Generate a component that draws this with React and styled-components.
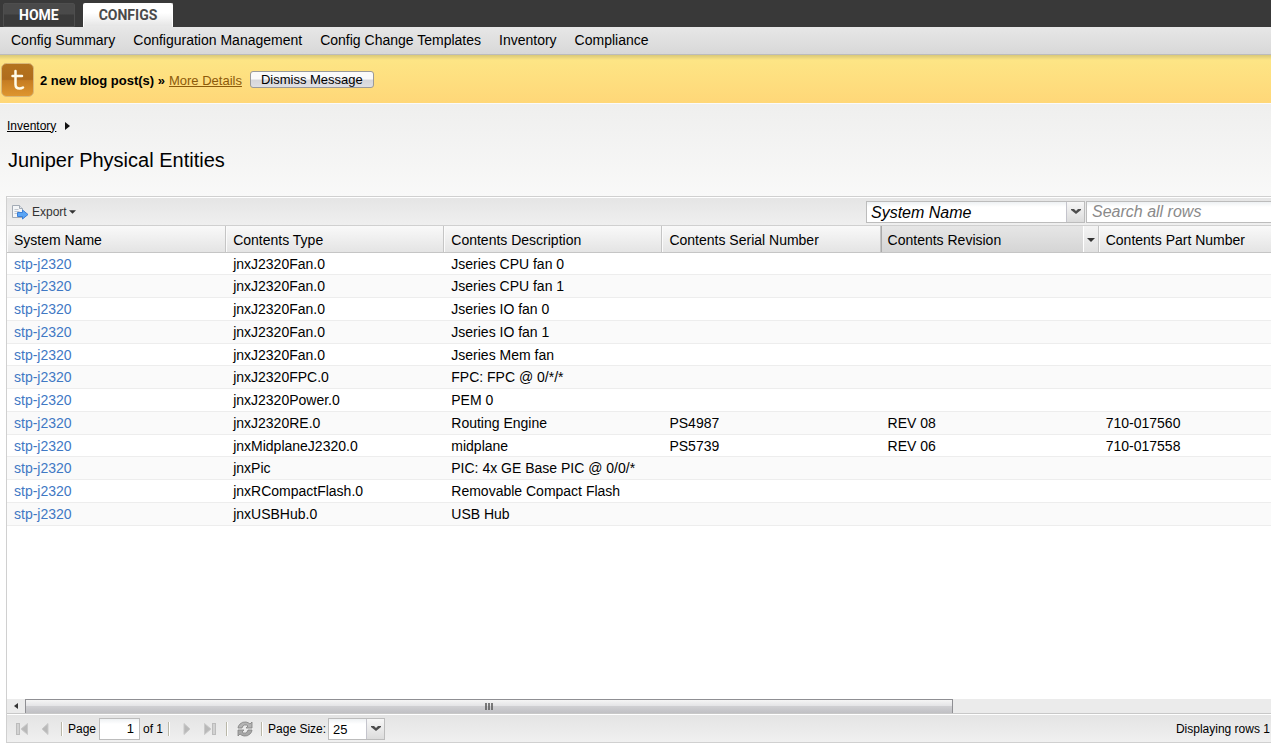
import React from "react";
import styled, { createGlobalStyle } from "styled-components";

const GlobalStyle = createGlobalStyle`
  * {
    box-sizing: border-box;
  }
  html {
    overflow: hidden;
    background-color: white;
  }
  body {
    margin: 0;
    font-family: "Liberation Sans", Arial, sans-serif;
    font-size: 12px;
    color: black;
  }
  button, input, select {
    font-family: inherit;
    color: inherit;
  }
`;

const Page = styled.div`
  display: flex;
  flex-direction: column;
  height: 100vh;
  overflow: hidden;
`;

const TabBar = styled.nav`
  display: flex;
  gap: 8px;
  padding: 3px 3px 0;
  background-color: #393939;
`;

const Tab = styled.a`
  height: 24px;
  padding: 0 15px;
  border: 1px solid ${(props) => (props.$active ? "#ffffff" : "#4e4e4e")};
  border-bottom-color: ${(props) => (props.$active ? "#e8e8e8" : "#4e4e4e")};
  border-radius: 2px 2px 0 0;
  background: ${(props) =>
    props.$active
      ? "linear-gradient(#ffffff 40%, #e6e6e6)"
      : "linear-gradient(#4a4a4a 45%, #3a3a3a 50%)"};
  color: ${(props) => (props.$active ? "#4a4a4a" : "#ffffff")};
  font-family: Roboto, "Liberation Sans", sans-serif;
  font-size: 14px;
  font-weight: bold;
  line-height: 23px;
  text-decoration: none;
`;

const SubNav = styled.nav`
  display: flex;
  gap: 18px;
  height: 28px;
  padding: 0 11px;
  border-bottom: 1px solid #bcbcbc;
  background: linear-gradient(#e7e7e7, #d8d8d8);
`;

const SubLink = styled.a`
  color: black;
  font-size: 14px;
  line-height: 27px;
  text-decoration: none;
  white-space: nowrap;
`;

const Banner = styled.div`
  display: flex;
  align-items: center;
  height: 48px;
  padding: 1px 1px 0;
  background: linear-gradient(#d8c878, #fde585 5px, #ffd778);
  font-size: 13px;
`;

const BannerText = styled.b`
  margin: 1px 4px 0 6px;
`;

const BannerLink = styled.a`
  margin: 1px 8px 0 0;
  color: #8c5a0a;
`;

const Dismiss = styled.button`
  height: 17px;
  padding: 0 10px;
  border: 1px solid #9a9a9a;
  border-radius: 3px;
  background: linear-gradient(#fafafa 45%, #d6d6da 55%, #dfdfe3);
  font-size: 13px;
  line-height: 15px;
`;

const Content = styled.main`
  display: flex;
  flex: 1;
  flex-direction: column;
  padding: 0 0 6px 6px;
  border-top: 1px solid #fafafa;
  background: linear-gradient(#efefee, #ffffff 150px);
`;

const Crumbs = styled.div`
  display: flex;
  align-items: center;
  gap: 9px;
  height: 42px;
  padding: 1px 0 0 1px;
`;

const CrumbLink = styled.a`
  color: black;
`;

const Title = styled.h1`
  height: 50px;
  margin: 0;
  padding-left: 2px;
  font-size: 20px;
  font-weight: normal;
  line-height: 28px;
`;

/* the grid is wider than the window and runs out on the right */
const Grid = styled.section`
  display: flex;
  flex: 1;
  flex-direction: column;
  margin-right: -63px;
  border: 1px solid #d0d0d0;
  background-color: white;
`;

const Toolbar = styled.div`
  display: flex;
  align-items: center;
  height: 29px;
  border-top: 1px solid white;
  border-bottom: 1px solid #d0d0d0;
  background: linear-gradient(#e5e5e5, #efefef);
`;

const ExportButton = styled.button`
  display: flex;
  align-items: center;
  gap: 2px;
  margin-right: auto;
  padding: 0 4px;
  border: none;
  background: none;
  color: #333;
  font-size: 12px;
`;

const SelectBox = styled.div`
  position: relative;
  width: ${(props) => props.$width};
  height: 22px;
  border: 1px solid #bcbcbc;
  background: linear-gradient(#eef1f3, #ffffff 5px);
`;

const Select = styled.select`
  width: 100%;
  height: 100%;
  padding: 1px 20px 0 4px;
  border: none;
  appearance: none;
  background: none;
  font-size: ${(props) => props.$size};
  font-style: ${(props) => (props.$italic ? "italic" : "normal")};
`;

const Trigger = styled.span`
  position: absolute;
  top: 0;
  right: 0;
  bottom: 0;
  display: flex;
  align-items: center;
  justify-content: center;
  width: 18px;
  border-left: 1px solid #c4c4cc;
  background: linear-gradient(#f7f7f7, #dcdcdc);
  pointer-events: none;
`;

const Search = styled.input`
  width: 247px;
  height: 22px;
  margin-left: 1px;
  padding: 1px 5px 0;
  border: 1px solid #bcbcbc;
  background: linear-gradient(#eef1f3, #ffffff 5px);
  font-size: 16px;
  font-style: italic;
  &::placeholder {
    color: #8a8a8a;
  }
`;

const TableArea = styled.div`
  flex: 1;
  overflow: hidden;
`;

const Table = styled.table`
  width: 1528px;
  border-collapse: separate;
  border-spacing: 0;
  table-layout: fixed;
  font-size: 14px;
`;

const Th = styled.th`
  width: 218px;
  height: 27px;
  padding: 0;
  border-right: 1px solid #c5c5c5;
  border-bottom: 1px solid #c5c5c5;
  background: ${(props) =>
    props.$sorted
      ? "linear-gradient(#e6e6e6, #d5d5d5)"
      : "linear-gradient(#f9f9f9, #e4e4e4)"};
  font-weight: normal;
  text-align: left;
  &:first-child {
    width: 219px;
  }
`;

const ThInner = styled.div`
  display: flex;
  justify-content: space-between;
  height: 26px;
  padding-left: 6px;
  border-left: 1px solid ${(props) => (props.$sorted ? "#aaaaaa" : "#fbfbfb")};
  line-height: 28px;
`;

const SortMenu = styled.button`
  width: 15px;
  padding: 0 0 4px;
  border: none;
  border-left: 1px solid white;
  background: linear-gradient(#f4f4f4, #e0e0e0);
`;

/* every fourth row is a pixel shorter, so four rows take 91px */
const Row = styled.tr`
  height: 23px;
  background-color: white;
  &:nth-child(4n + 1) {
    height: 22px;
  }
  &:nth-child(even) {
    background-color: #fafafa;
  }
`;

const Td = styled.td`
  padding: 0 7px;
  border-bottom: 1px solid #ededed;
  line-height: 16px;
  white-space: nowrap;
`;

const NodeLink = styled.a`
  color: #3f78c4;
  text-decoration: none;
`;

const Scroll = styled.div`
  display: flex;
  height: 15px;
  background-color: #ebebeb;
  border-bottom: 1px solid #c8c8c8;
`;

const ScrollArrow = styled.button`
  width: 18px;
  padding: 0;
  border: none;
  background: none;
  line-height: 0;
`;

const Thumb = styled.div`
  display: flex;
  align-items: center;
  justify-content: center;
  width: 70%;
  border: 1px solid #8f8f93;
  border-bottom: none;
  background: linear-gradient(#f5f5f5, #e4e4e6 45%, #cfcfd2 50%, #c0c0c4);
`;

const Pager = styled.div`
  display: flex;
  align-items: center;
  height: 28px;
  padding: 0 9px 0 3px;
  border-top: 1px solid white;
  background: linear-gradient(#e4e4e4, #f0f0f0);
`;

const IconButton = styled.button`
  display: flex;
  align-items: center;
  justify-content: center;
  width: 23px;
  height: 20px;
  padding: 0;
  border: none;
  background: none;
`;

const Divider = styled.span`
  width: 2px;
  height: 14px;
  margin: 0 5px;
  border-left: 1px solid #b9b7a8;
  border-right: 1px solid white;
`;

const PageInput = styled.input`
  width: 41px;
  height: 22px;
  margin: 0 3px;
  padding: 0 5px;
  border: 1px solid #bcbcbc;
  background: linear-gradient(#eef1f3, #ffffff 5px);
  font-size: 13px;
  text-align: right;
`;

const SizeLabel = styled.label`
  margin-right: 2px;
`;

const Total = styled.span`
  margin-left: auto;
  white-space: nowrap;
`;

function Logo() {
  return (
    <svg width="33" height="34" viewBox="0 0 33 34" aria-hidden="true">
      <defs>
        <linearGradient id="logo" x1="0" y1="0" x2="0" y2="1">
          <stop offset="0" stopColor="#b4741e" />
          <stop offset="0.48" stopColor="#b06c1c" />
          <stop offset="0.52" stopColor="#c67d22" />
          <stop offset="1" stopColor="#df9630" />
        </linearGradient>
      </defs>
      <rect x="0.5" y="0.5" width="32" height="33" rx="5" fill="url(#logo)" stroke="#d9b878" />
      <path d="M14.5 8v13.500q0 4 4 4q2 0 3.500-1M11.500 13h9.500" fill="none" stroke="#fffbe8" strokeWidth="2.500" strokeLinecap="round" />
    </svg>
  );
}

function ExportIcon() {
  return (
    <svg width="19" height="16" viewBox="0 0 19 16" aria-hidden="true">
      <path d="M1.500 1.500h7l3 3v9h-10z" fill="#f4f6f8" stroke="#a3abb5" />
      <path d="M8.500 1.500v3h3" fill="#dfe4ea" stroke="#a3abb5" />
      <path d="M3.500 5.500h4M3.500 7.500h5M3.500 9.500h3" stroke="#c0c6ce" />
      <path d="M6.500 8.500h5v-2.500l5.500 4.500l-5.500 4.500v-2.500h-5z" fill="#5aa5f5" stroke="#3b7fd8" />
    </svg>
  );
}

function Caret({ size = 7 }) {
  return (
    <svg width={size} height="4" viewBox="0 0 8 4" aria-hidden="true">
      <path d="M0 0h8l-4 4z" fill="#333" />
    </svg>
  );
}

function Chevron() {
  return (
    <svg width="10" height="6" viewBox="0 0 10 6" aria-hidden="true">
      <path d="M0 0h3l2 2l2-2h3v1l-5 4l-5-4z" fill="#4d4d4d" />
    </svg>
  );
}

function PageArrow({ flip, bar }) {
  return (
    <svg width="12" height="12" viewBox="0 0 12 12" aria-hidden="true">
      <g transform={flip ? "matrix(-1 0 0 1 12 0)" : undefined}>
        {bar && <rect x="0.5" y="0.5" width="3" height="11" fill="#d2d2d2" stroke="#bcbcbc" />}
        <path
          d={bar ? "M11.500 0.500v11l-6.500-5.500z" : "M9 0.500v11l-6-5.500z"}
          fill="#b9b9b9"
          stroke="#c9c9c9"
        />
      </g>
    </svg>
  );
}

function RefreshIcon() {
  return (
    <svg width="16" height="16" viewBox="0 0 16 16" aria-hidden="true">
      <path d="M1 7q0-2 2-4q2.500-2.500 6-2q2.500 0.500 4 2l2-2v6h-6l2-2q-1.500-1.500-3.500-1q-2 0.500-2.500 3z" fill="#b4b4b4" stroke="#808080" strokeWidth="0.8" />
      <path d="M15 9q0 2-2 4q-2.500 2.500-6 2q-2.500-0.500-4-2l-2 2v-6h6l-2 2q1.500 1.500 3.500 1q2-0.500 2.500-3z" fill="#a8a8a8" stroke="#808080" strokeWidth="0.8" />
    </svg>
  );
}

const subLinks = [
  "Config Summary",
  "Configuration Management",
  "Config Change Templates",
  "Inventory",
  "Compliance",
];

const columns = [
  "System Name",
  "Contents Type",
  "Contents Description",
  "Contents Serial Number",
  "Contents Revision",
  "Contents Part Number",
];

const rows = [
  ["jnxJ2320Fan.0", "Jseries CPU fan 0"],
  ["jnxJ2320Fan.0", "Jseries CPU fan 1"],
  ["jnxJ2320Fan.0", "Jseries IO fan 0"],
  ["jnxJ2320Fan.0", "Jseries IO fan 1"],
  ["jnxJ2320Fan.0", "Jseries Mem fan"],
  ["jnxJ2320FPC.0", "FPC: FPC @ 0/*/*"],
  ["jnxJ2320Power.0", "PEM 0"],
  ["jnxJ2320RE.0", "Routing Engine", "PS4987", "REV 08", "710-017560"],
  ["jnxMidplaneJ2320.0", "midplane", "PS5739", "REV 06", "710-017558"],
  ["jnxPic", "PIC: 4x GE Base PIC @ 0/0/*"],
  ["jnxRCompactFlash.0", "Removable Compact Flash"],
  ["jnxUSBHub.0", "USB Hub"],
];

function EntityTable() {
  return (
    <Table>
      <thead>
        <tr>
          {columns.map((name) => {
            const sorted = name === "Contents Revision";
            return (
              <Th key={name} $sorted={sorted}>
                <ThInner $sorted={sorted}>
                  {name}
                  {sorted && (
                    <SortMenu aria-label="Column menu">
                      <Caret size={8} />
                    </SortMenu>
                  )}
                </ThInner>
              </Th>
            );
          })}
          <Th />
        </tr>
      </thead>
      <tbody>
        {rows.map((row, i) => (
          <Row key={i}>
            <Td>
              <NodeLink href="#">stp-j2320</NodeLink>
            </Td>
            {[0, 1, 2, 3, 4, 5].map((n) => (
              <Td key={n}>{row[n]}</Td>
            ))}
          </Row>
        ))}
      </tbody>
    </Table>
  );
}

function App() {
  return (
    <Page>
      <GlobalStyle />
      <TabBar>
        <Tab href="#">HOME</Tab>
        <Tab href="#" $active>CONFIGS</Tab>
      </TabBar>
      <SubNav>
        {subLinks.map((name) => (
          <SubLink href="#" key={name}>{name}</SubLink>
        ))}
      </SubNav>
      <Banner>
        <Logo />
        <BannerText>2 new blog post(s) »</BannerText>
        <BannerLink href="#">More Details</BannerLink>
        <Dismiss>Dismiss Message</Dismiss>
      </Banner>
      <Content>
        <Crumbs>
          <CrumbLink href="#">Inventory</CrumbLink>
          <svg width="6" height="8" viewBox="0 0 6 8" aria-hidden="true">
            <path d="M0 0l5 4l-5 4z" fill="#111" />
          </svg>
        </Crumbs>
        <Title>Juniper Physical Entities</Title>
        <Grid>
          <Toolbar>
            <ExportButton>
              <ExportIcon />
              <span>Export</span>
              <Caret />
            </ExportButton>
            <SelectBox $width="219px">
              <Select $size="16px" $italic aria-label="Search column">
                <option>System Name</option>
              </Select>
              <Trigger><Chevron /></Trigger>
            </SelectBox>
            <Search placeholder="Search all rows" aria-label="Search all rows" />
          </Toolbar>
          <TableArea>
            <EntityTable />
          </TableArea>
          <Scroll>
            <ScrollArrow aria-label="Scroll left">
              <svg width="4" height="6" viewBox="0 0 4 6">
                <path d="M4 0v6l-4-3z" fill="#333" />
              </svg>
            </ScrollArrow>
            <Thumb>
              <svg width="8" height="7" viewBox="0 0 8 7">
                <path d="M1 0v7M4 0v7M7 0v7" stroke="#555" strokeWidth="1.500" />
              </svg>
            </Thumb>
          </Scroll>
          <Pager>
            <IconButton aria-label="First page"><PageArrow bar /></IconButton>
            <IconButton aria-label="Previous page"><PageArrow /></IconButton>
            <Divider />
            <label htmlFor="page">Page</label>
            <PageInput id="page" defaultValue="1" />
            of 1
            <Divider />
            <IconButton aria-label="Next page"><PageArrow flip /></IconButton>
            <IconButton aria-label="Last page"><PageArrow flip bar /></IconButton>
            <Divider />
            <IconButton aria-label="Refresh"><RefreshIcon /></IconButton>
            <Divider />
            <SizeLabel htmlFor="size">Page Size:</SizeLabel>
            <SelectBox $width="57px">
              <Select id="size" $size="13px">
                <option>25</option>
              </Select>
              <Trigger><Chevron /></Trigger>
            </SelectBox>
            <Total>Displaying rows 1 - 12 of 12</Total>
          </Pager>
        </Grid>
      </Content>
    </Page>
  );
}

export default App;
